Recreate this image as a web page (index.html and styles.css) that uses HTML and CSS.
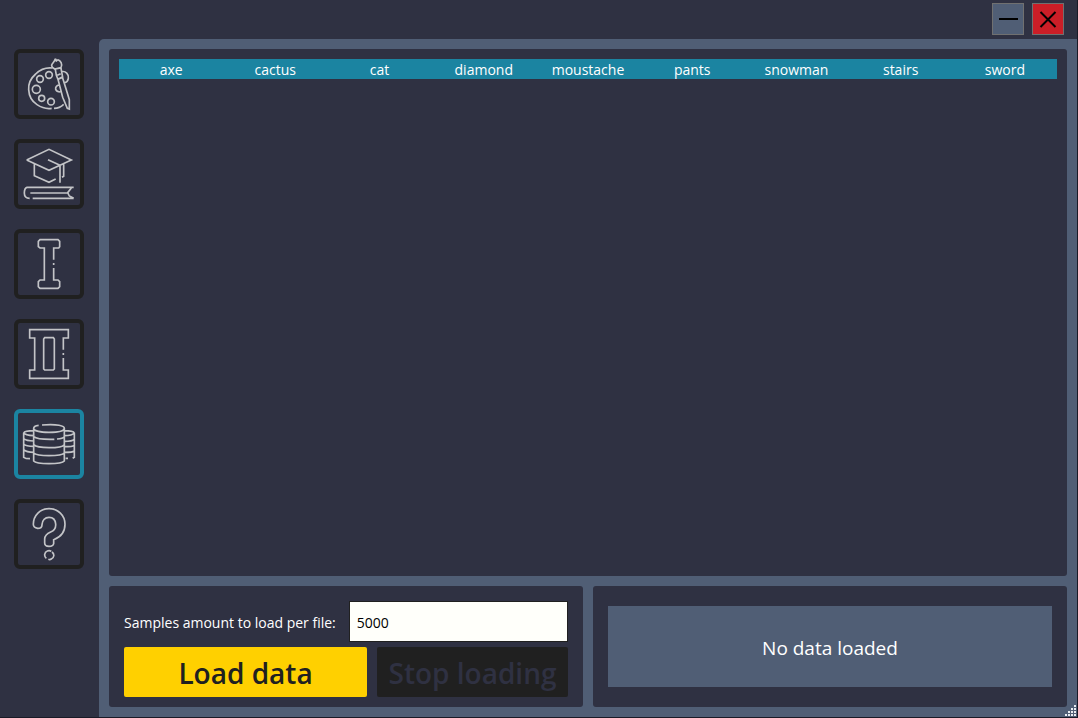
FILE: index.html
```html
<!DOCTYPE html>
<html lang="en">
<head>
<meta charset="utf-8">
<title>Data loader</title>
<link rel="stylesheet" href="styles.css">
</head>
<body>
<div class="window">
  <header class="titlebar">
    <button class="window-button" type="button" aria-label="Minimize">
      <svg viewBox="0 0 30 30"><path d="M6 15H25"/></svg>
    </button>
    <button class="window-button close" type="button" aria-label="Close">
      <svg viewBox="0 0 30 30"><path d="M7.500 8L22.500 23M22.500 8L7.500 23"/></svg>
    </button>
  </header>
  <nav class="sidebar">
    <button class="nav-button" type="button" aria-label="Draw">
      <svg viewBox="24 24 186 186">
        <path d="M128 69C112 67 91 73 77 87C62 100 55 117 56 134C57 153 67 170 81 179C96 189 112 192 125 190M132 190C143 190 154 185 161 178"/>
        <circle cx="117" cy="90" r="10"/><circle cx="90" cy="102" r="10"/><circle cx="79" cy="133" r="12"/><circle cx="95" cy="160" r="9"/><circle cx="123" cy="170" r="10"/>
        <path d="M136 41C135 49 128 53 125 60C124 65 129 69 134 72L153 68C159 57 151 47 144 44M136 41L139 48L144 44M136 73L139 91L144 103L158 97L153 70M142 91L152 86M144 103L157 96L168 131L178 164V192L172 190L158 157L144 103M155 80C167 77 177 88 175 100C174 107 170 112 163 114M147 120C140 121 136 127 137 133C139 139 145 141 151 141"/>
      </svg>
    </button>
    <button class="nav-button" type="button" aria-label="Learn">
      <svg viewBox="24 24 186 186">
        <path d="M50 75L117 43L184 75L150 91L117 106L50 75M114 74L150 91V143M161 87V124L156 127M73 87V122L117 142L137 132M191 157H51C44 159 43 166 43 174C43 184 49 190 59 190M68 190H191M184 159L173 173L178 183L191 190M61 174H173"/>
      </svg>
    </button>
    <button class="nav-button" type="button" aria-label="Level one">
      <svg viewBox="24 24 186 186">
        <path d="M131 104V69H146L149 65V49L144 44H90L85 49V65L90 69H103V165H90L85 170V185L90 190H144L149 185V170L144 165H131V129M131 114V120"/>
      </svg>
    </button>
    <button class="nav-button" type="button" aria-label="Level two">
      <svg viewBox="24 24 186 186">
        <path d="M160 104V69H175V44H59V69H74V165H59V190H175V165H160V129M160 114V120M104 68H130L133 72V162L130 165H104L101 162V72Z"/>
      </svg>
    </button>
    <button class="nav-button active" type="button" aria-label="Data" aria-current="page">
      <svg viewBox="24 24 186 186">
        <path d="M96 60C143 56 163 63 163 70C162 79 138 82 117 82C94 82 72 78 71 70C71 66 77 62 86 61M71 70V168C76 174 95 176 117 176C139 176 158 174 163 168V70M71 95C78 101 96 104 133 103M141 102C151 101 160 99 163 95M71 119C78 126 95 128 117 128C139 128 158 126 163 119M71 144C78 151 95 152 117 152C139 152 158 150 163 144M71 77C52 77 43 80 41 84V157C45 160 54 161 60 161M41 84C45 90 55 91 71 92M41 101C47 106 57 108 71 108M41 117C47 123 57 124 71 124M41 134C47 140 57 142 71 142M163 77C182 77 191 80 193 84V157L188 160M163 92C180 92 189 89 193 84M163 109C179 109 189 107 193 103M163 125C179 125 189 124 193 121M163 142C179 142 189 141 193 138M167 160H174"/>
      </svg>
    </button>
    <button class="nav-button" type="button" aria-label="Help">
      <svg viewBox="24 24 186 186">
        <path d="M70 88C70 61 91 41 117 41C144 41 165 61 165 88C165 111 151 127 131 134V146C130 151 125 154 117 154C109 154 104 150 104 144V132C104 121 113 115 122 111C134 106 138 98 137 87C136 74 128 67 117 67C105 67 97 76 96 89C96 96 91 100 83 100C75 99 70 95 70 88ZM126 171C134 177 133 188 124 192C121 194 118 194 115 193M109 190C101 184 103 171 112 168C116 166 121 167 124 169"/>
      </svg>
    </button>
  </nav>
  <main class="content">
    <section class="panel data-panel">
      <table class="data-table">
        <thead><tr><th>axe</th><th>cactus</th><th>cat</th><th>diamond</th><th>moustache</th><th>pants</th><th>snowman</th><th>stairs</th><th>sword</th></tr></thead>
      </table>
    </section>
    <form class="panel load-form">
      <div class="field">
        <label for="samples">Samples amount to load per file:</label>
        <input id="samples" type="text" value="5000">
      </div>
      <div class="actions">
        <button class="action load" type="button">Load data</button>
        <button class="action stop" type="button" disabled>Stop loading</button>
      </div>
    </form>
    <section class="panel status-panel">
      <output class="status">No data loaded</output>
    </section>
  </main>
  <svg class="grip" viewBox="0 0 12 12" aria-hidden="true"><path d="M9 0h2v2h-2zM6 3h2v2h-2zM9 3h2v2h-2zM3 6h2v2h-2zM6 6h2v2h-2zM9 6h2v2h-2zM0 9h2v2h-2zM3 9h2v2h-2zM6 9h2v2h-2zM9 9h2v2h-2z"/></svg>
</div>
</body>
</html>
```

FILE: styles.css
```css
* {
  box-sizing: border-box;
}

body {
  margin: 0;
  background: #2f3142;
  color: #fff;
  font: 14px/20px "Segoe UI", "Open Sans", "Noto Sans", sans-serif;
}

button,
input {
  margin: 0;
  font: inherit;
}

.window {
  position: relative;
  display: grid;
  grid-template: auto 1fr / auto 1fr;
  min-height: 100vh;
  border: solid #191a26;
  border-width: 0 1px 1px 0;
}

.titlebar {
  grid-column: 1 / -1;
  display: flex;
  justify-content: flex-end;
  gap: 8px;
  padding: 3px 13px 4px;
}

.window-button {
  width: 32px;
  height: 32px;
  padding: 0;
  border: 1px solid #707070;
  background: #505e75;
}

.window-button.close {
  background: #cb1e27;
}

.window-button svg {
  display: block;
  fill: none;
  stroke: #000;
  stroke-width: 2;
}

.sidebar {
  display: flex;
  flex-direction: column;
  gap: 20px;
  padding: 10px 15px 10px 14px;
}

.nav-button {
  width: 70px;
  height: 70px;
  padding: 0;
  border: 4px solid #202020;
  border-radius: 6px;
  background: transparent;
}

.nav-button.active {
  border-color: #1b84a1;
}

.nav-button svg {
  display: block;
  fill: none;
  stroke: #c3c4c7;
  stroke-width: 5;
}

.content {
  display: grid;
  grid-template: 1fr auto / 1fr 1fr;
  gap: 10px;
  padding: 10px;
  border-top-left-radius: 5px;
  background: #505e75;
}

.panel {
  min-width: 0;
  border-radius: 3px;
  background: #2f3142;
}

.data-panel {
  grid-column: 1 / -1;
  padding: 10px;
}

.data-table {
  width: 100%;
  table-layout: fixed;
  border-collapse: collapse;
}

.data-table th {
  padding: 2px 0 0;
  background: #1b84a1;
  font-weight: 400;
  line-height: 18px;
}

.load-form {
  display: flex;
  flex-direction: column;
  gap: 5px;
  padding: 15px 15px 10px;
}

.field {
  display: flex;
  align-items: center;
  gap: 13px;
}

.field label {
  padding-top: 2px;
  white-space: nowrap;
}

.field input {
  flex: 1;
  min-width: 0;
  height: 41px;
  padding: 2px 7px 0;
  border: 1px solid #202020;
  background: #fffffa;
  color: #000;
}

.actions {
  display: grid;
  grid-template-columns: 243fr 191fr;
  gap: 10px;
}

.action {
  height: 50px;
  padding: 2px 0 0;
  border: 0;
  border-radius: 2px;
  font-size: 28px;
  font-weight: 600;
  line-height: 48px;
  white-space: nowrap;
}

.load {
  background: #ffd000;
  color: #202020;
}

.stop {
  background: #202020;
  color: #2f3142;
}

.status-panel {
  display: flex;
  padding: 20px 15px;
}

.status {
  flex: 1;
  display: flex;
  align-items: center;
  justify-content: center;
  padding-top: 2px;
  background: #505e75;
  font-size: 19px;
}

.grip {
  position: absolute;
  right: 0;
  bottom: 0;
  width: 12px;
  height: 12px;
  fill: #e8ebf0;
}
```
